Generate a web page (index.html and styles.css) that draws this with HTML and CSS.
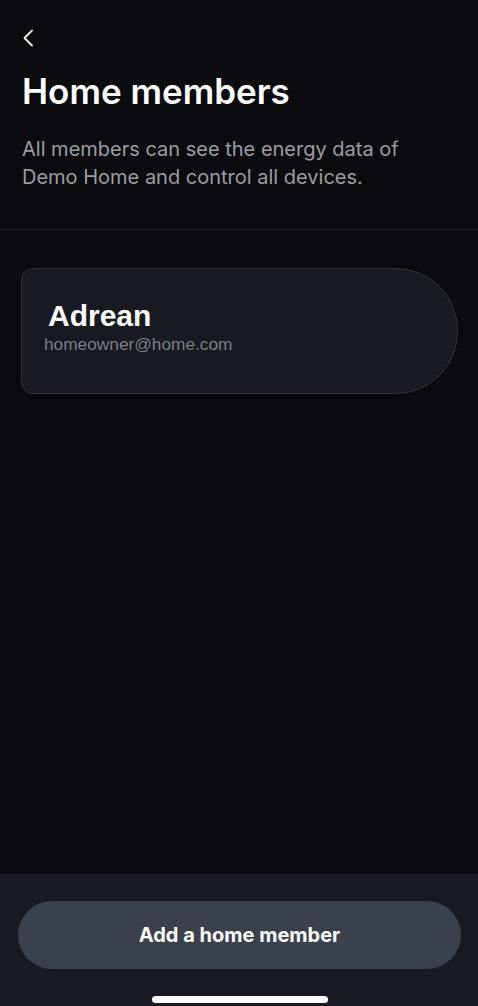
FILE: index.html
```html
<!DOCTYPE html>
<html lang="en">
<head>
<meta charset="utf-8">
<title>Home members</title>
<link rel="stylesheet" href="styles.css">
</head>
<body>
<div class="page">
  <header class="top">
    <button class="back" aria-label="Back">
      <svg width="12" height="18" viewBox="0 0 12 18" fill="none"><path d="M10 1.5 L2.5 9 L10 16.5" stroke="#f2f2f2" stroke-width="1.8" stroke-linecap="round" stroke-linejoin="round"/></svg>
    </button>
    <h1 class="title">Home members</h1>
    <p class="desc">All members can see the energy data of Demo Home and control all devices.</p>
  </header>
  <div class="divider"></div>
  <main class="list">
    <div class="member">
      <div class="member-name">Adrean</div>
      <div class="member-email">homeowner@home.com</div>
    </div>
  </main>
  <footer class="footer">
    <button class="add-btn">Add a home member</button>
    <div class="home-indicator"></div>
  </footer>
</div>
</body>
</html>
```
FILE: styles.css
```css
* { box-sizing: border-box; }
html, body { margin: 0; padding: 0; background: #0a0b0e; }
body { font-family: Inter, "Noto Sans", sans-serif; color: #fff; }
.page { display: flex; flex-direction: column; height: 1006px; width: 478px; overflow: hidden; }
.top { padding: 29px 22px 0 22px; }
.back { display: block; background: none; border: 0; padding: 0; margin: 0; width: 12px; height: 18px; }
.back svg { display: block; }
.title { margin: 24px 0 0 0; font-size: 35px; line-height: 40px; font-weight: 600; letter-spacing: 0; color: #fff; }
.desc { margin: 24px 0 0 0; font-size: 20px; line-height: 28px; color: #9c9da2; font-weight: 400; max-width: 420px; }
.divider { margin-top: 38px; height: 1px; background: #22252a; }
.list { padding: 38px 20px 0 21px; flex: 1; }
.member { height: 126px; border: 1px solid #30343c; background: #171a21; border-radius: 12px 62px 62px 12px; padding: 31px 0 0 22px; }
.member-name { font-family: "Liberation Sans", Arial, sans-serif; font-weight: 700; font-size: 30px; line-height: 32px; padding-left: 4px; color: #fff; }
.member-email { margin-top: 2px; font-family: "Liberation Sans", Arial, sans-serif; font-size: 17.3px; line-height: 20px; color: #7b7f88; }
.footer { height: 132px; background: #171a21; border-top: 1px solid #1e2128; padding: 26px 17px 0 18px; display: flex; flex-direction: column; align-items: center; }
.add-btn { width: 443px; height: 68px; border: 0; border-radius: 34px; background: #3a404c; color: #fff; font-family: Inter, "Noto Sans", sans-serif; font-weight: 700; font-size: 20px; padding: 0; }
.home-indicator { margin-top: 27px; width: 176px; height: 7px; border-radius: 4px; background: #fff; }
```
